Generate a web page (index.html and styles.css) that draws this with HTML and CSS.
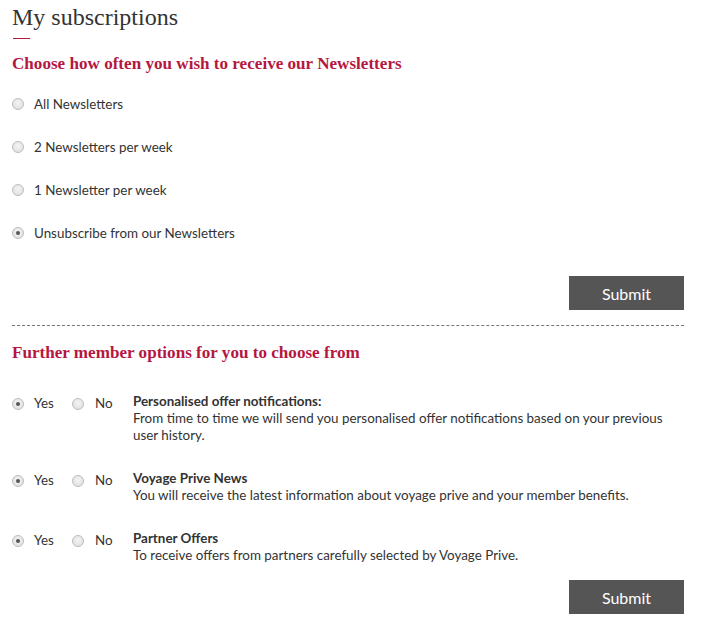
FILE: index.html
```html
<!DOCTYPE html>
<html>
<head>
<meta charset="utf-8">
<link rel="stylesheet" href="styles.css">
</head>
<body>
<div class="page">
  <h1 class="title">My subscriptions</h1>
  <div class="title-rule"></div>

  <h2 class="section-head">Choose how often you wish to receive our Newsletters</h2>
  <ul class="freq">
    <li class="freq-item"><span class="radio"></span><span>All Newsletters</span></li>
    <li class="freq-item"><span class="radio"></span><span>2 Newsletters per week</span></li>
    <li class="freq-item"><span class="radio"></span><span>1 Newsletter per week</span></li>
    <li class="freq-item"><span class="radio checked"></span><span>Unsubscribe from our Newsletters</span></li>
  </ul>
  <div class="actions first"><button class="submit">Submit</button></div>

  <div class="divider"></div>

  <h2 class="section-head second">Further member options for you to choose from</h2>
  <div class="options">
    <div class="option">
      <div class="choice"><span class="radio checked"></span><span class="yes">Yes</span><span class="radio"></span><span class="no">No</span></div>
      <div class="desc"><div class="desc-title">Personalised offer notifications:</div><div>From time to time we will send you personalised offer notifications based on your previous user history.</div></div>
    </div>
    <div class="option">
      <div class="choice"><span class="radio checked"></span><span class="yes">Yes</span><span class="radio"></span><span class="no">No</span></div>
      <div class="desc"><div class="desc-title">Voyage Prive News</div><div>You will receive the latest information about voyage prive and your member benefits.</div></div>
    </div>
    <div class="option">
      <div class="choice"><span class="radio checked"></span><span class="yes">Yes</span><span class="radio"></span><span class="no">No</span></div>
      <div class="desc"><div class="desc-title">Partner Offers</div><div>To receive offers from partners carefully selected by Voyage Prive.</div></div>
    </div>
  </div>
  <div class="actions last"><button class="submit">Submit</button></div>
</div>
</body>
</html>
```
FILE: styles.css
```css
html, body {
  margin: 0;
  padding: 0;
  background: #fff;
}
.page {
  width: 672px;
  padding: 0 0 0 12px;
  font-family: Lato, "Liberation Sans", sans-serif;
  font-size: 13.4px;
  color: #333;
}
.title {
  margin: 0;
  padding-top: 3px;
  font-family: "Liberation Serif", serif;
  font-weight: normal;
  font-size: 24px;
  line-height: 28px;
  color: #333;
}
.title-rule {
  width: 17px;
  height: 1px;
  background: #b5173f;
  margin: 7px 0 0 1px;
}
.section-head {
  margin: 15px 0 0 0;
  font-family: "Liberation Serif", serif;
  font-weight: bold;
  font-size: 17.1px;
  line-height: 20px;
  color: #b5173f;
}
.section-head.second {
  margin-top: 17px;
}
.freq {
  list-style: none;
  margin: 20px 0 0 0;
  padding: 0;
  display: flex;
  flex-direction: column;
  gap: 23px;
}
.freq-item {
  display: flex;
  align-items: center;
  height: 20px;
  gap: 10px;
}
.radio {
  display: inline-block;
  box-sizing: border-box;
  width: 12px;
  height: 12px;
  border-radius: 50%;
  border: 1px solid #bdbdbd;
  background: radial-gradient(circle at 50% 40%, #f4f4f4 0, #dcdcdc 100%);
  position: relative;
  flex: none;
}
.radio.checked::after {
  content: "";
  position: absolute;
  left: 3px;
  top: 3px;
  width: 4px;
  height: 4px;
  border-radius: 50%;
  background: #555;
}
.actions {
  display: flex;
  justify-content: flex-end;
}
.actions.first {
  margin-top: 33px;
}
.actions.last {
  margin-top: 16px;
}
.submit {
  width: 115px;
  height: 34px;
  border: none;
  background: #555;
  color: #fff;
  font-family: Lato, "Liberation Sans", sans-serif;
  font-size: 16px;
  padding: 0;
}
.divider {
  margin-top: 15px;
  border-top: 1px dashed #777;
  height: 0;
}
.options {
  margin-top: 30px;
  display: flex;
  flex-direction: column;
  gap: 26px;
}
.option {
  display: flex;
  line-height: 17px;
}
.choice {
  width: 121px;
  flex: none;
  display: flex;
  align-items: center;
  height: 17px;
  margin-top: 2px;
}
.yes {
  margin-left: 10px;
  width: 38px;
}
.no {
  margin-left: 11px;
}
.desc {
  flex: 1;
}
.desc-title {
  font-weight: bold;
}
```
